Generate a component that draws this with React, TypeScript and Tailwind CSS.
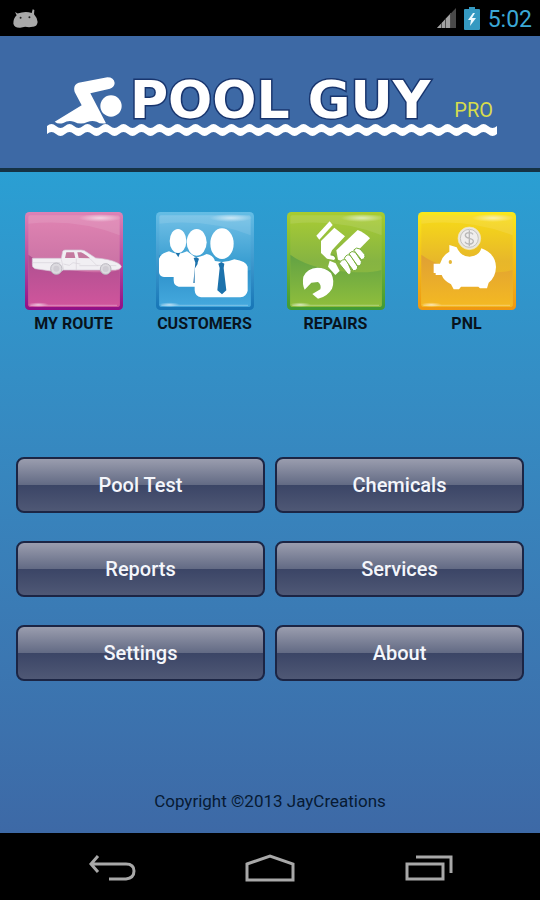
import type { ReactNode } from "react";

type Tile = {
  id: string;
  label: string;
  viewBox: string;
  edge: string[];
  top: string;
  middle: string;
  shade: string;
  bottom: string;
  art: ReactNode;
};

const actions = ["Pool Test", "Chemicals", "Reports", "Services", "Settings", "About"];

const tiles: Tile[] = [
  {
    id: "route",
    label: "MY ROUTE",
    edge: ["#dd83b6", "#8f0f86"],
    top: "#e084b2",
    middle: "#cc74a6",
    shade: "#ad5090",
    bottom: "#d0559c",
    viewBox: "27 24 294 294",
    art: (
      <g>
        <path
          d="M49 163H136L140 142Q142 138 148 138H195Q205 138 213 145L239 162Q280 165 303 176Q316 182 316 189Q313 196 298 198H142Q135 204 112 202L57 194Q47 190 49 180Z"
          fill="#f1eff3"
          stroke="#d5c7d7"
          strokeWidth="2"
        />
        <path d="M147 162L151 145H174L178 162ZM184 145H195Q203 147 222 163L188 162Z" fill="#c4799f" />
        <path
          d="M50 176H133M136 166L143 198M181 164V198M142 180L160 184 171 176 193 180M222 164L242 184 301 185M190 185H247"
          fill="none"
          stroke="#d6d2da"
          strokeWidth="2"
        />
        <circle cx="121" cy="194" r="17" fill="#dcdadf" stroke="#bab8c0" strokeWidth="3" />
        <circle cx="121" cy="194" r="9" fill="#cfccd3" />
        <circle cx="269" cy="195" r="16" fill="#dcdadf" stroke="#bab8c0" strokeWidth="3" />
        <circle cx="269" cy="195" r="9" fill="#cfccd3" />
      </g>
    ),
  },
  {
    id: "customers",
    label: "CUSTOMERS",
    edge: ["#65bde5", "#1675b6"],
    top: "#72c0e6",
    middle: "#3b9fd2",
    shade: "#2588c3",
    bottom: "#45a9de",
    viewBox: "31 26 294 294",
    art: (
      <g fill="#fff">
        <path d="M70 144Q96 158 124 144L151 163V211Q146 220 132 221H55Q41 219 40 207V166Q43 152 70 144Z" />
        <ellipse cx="97" cy="113" rx="25" ry="36" />
        <ellipse cx="153" cy="117" rx="30" ry="40" />
        <path d="M124 158Q150 169 183 152Q201 155 207 170V230Q202 248 176 250H99Q84 247 84 231V178Q93 163 124 158Z" />
        <path d="M144 164L152 162 160 166 156 178 151 239H143L149 178Z" fill="#1c72ac" />
        <path d="M192 168Q229 184 266 168Q302 174 306 190V262Q303 279 284 282H166Q148 279 147 261V196Q156 174 192 168Z" />
        <ellipse cx="229" cy="121" rx="35" ry="46" />
        <g fill="#1c72ac">
          <path d="M90 149H103L98 162Z" />
          <path d="M218 181L227 176 236 181 234 194 242 261 229 273 215 261 222 194Z" />
        </g>
      </g>
    ),
  },
  {
    id: "repairs",
    label: "REPAIRS",
    edge: ["#a9cc30", "#3f9a35"],
    top: "#a8cb34",
    middle: "#86b442",
    shade: "#62a244",
    bottom: "#8fbe3c",
    viewBox: "35 22 294 294",
    art: (
      <g fill="#fff">
        <path d="M123 93L163 50 172 61 132 105Z" />
        <path d="M137 109L177 69 209 95 170 137 165 149 182 158 176 166 155 162 137 145Z" />
        <path d="M183 137L247 76Q268 84 284 101L229 157 211 173 188 165Z" />
        <path d="M163 168L181 176 193 199 180 211 158 186Z" />
        <path d="M111 268L128 282Q156 276 170 252 179 229 167 205 150 189 126 189 96 190 84 216 80 238 88 255L108 234 128 232Q139 241 135 254Z" />
        <g stroke="#76ae39" strokeWidth="3" strokeLinejoin="round">
          <path d="M192 177Q199 161 214 166L227 197Q228 211 218 209Z" />
          <path d="M207 161Q215 145 226 153L247 186Q246 199 234 198Z" />
          <path d="M221 147Q229 136 240 143L258 170Q259 183 247 184Z" />
          <path d="M235 136Q243 126 254 133L268 149Q272 163 258 165Z" />
        </g>
        <path d="M166 151Q181 148 185 171" fill="none" stroke="#76ae39" strokeWidth="4" />
      </g>
    ),
  },
  {
    id: "pnl",
    label: "PNL",
    edge: ["#f9e81c", "#ee9612"],
    top: "#f7db18",
    middle: "#e7b72a",
    shade: "#dfa034",
    bottom: "#f4b922",
    viewBox: "32 24 294 294",
    art: (
      <g>
        <path
          d="M126 123L148 130Q160 158 187 158Q216 156 222 133Q265 149 266 189Q265 220 244 236L239 253H218L213 248H161L155 256H139L131 241Q109 230 103 213H85V207H79V179H98Q105 154 126 143Z"
          fill="#fff"
        />
        <ellipse cx="129" cy="174" rx="5" ry="6" fill="#e5b637" />
        <circle cx="186" cy="103" r="34" fill="#e9e6df" stroke="#f3e7b4" strokeWidth="2" />
        <circle cx="186" cy="103" r="27" fill="#efeded" stroke="#c3c2be" strokeWidth="3" />
        <path
          d="M197 91Q193 85 185 86 174 87 174 94 175 101 186 103 199 106 198 113 195 121 184 120 176 120 173 113M186 79V127"
          fill="none"
          stroke="#b9b8b8"
          strokeWidth="4"
        />
      </g>
    ),
  },
];

function TileIcon({ tile }: { tile: Tile }) {
  const [x, y] = tile.viewBox.split(" ").map(Number);

  return (
    <svg viewBox={tile.viewBox} className="size-[98px]" aria-hidden="true">
      <defs>
        <linearGradient id={`${tile.id}-edge`} x2="0" y2="1">
          <stop stopColor={tile.edge[0]} />
          <stop offset="1" stopColor={tile.edge[1]} />
        </linearGradient>
        <linearGradient id={`${tile.id}-face`} x2="0" y2="1">
          <stop stopColor={tile.top} />
          <stop offset="0.5" stopColor={tile.middle} />
          <stop offset="1" stopColor={tile.bottom} />
        </linearGradient>
        <linearGradient id={`${tile.id}-shade`} x2="0" y2="1">
          <stop stopColor={tile.shade} />
          <stop offset="1" stopColor={tile.bottom} />
        </linearGradient>
        <radialGradient id={`${tile.id}-shine`}>
          <stop stopColor="#fff" stopOpacity="0.6" />
          <stop offset="1" stopColor="#fff" stopOpacity="0" />
        </radialGradient>
      </defs>
      <g transform={`translate(${x} ${y})`}>
        <rect width="294" height="294" rx="13" fill={`url(#${tile.id}-edge)`} />
        <rect x="10" y="10" width="274" height="274" rx="5" fill={`url(#${tile.id}-face)`} />
        <path d="M10 128Q60 165 150 176T284 174V279Q284 284 279 284H15Q10 284 10 279Z" fill={`url(#${tile.id}-shade)`} />
        <path d="M10 35Q160 20 284 70V15Q284 10 279 10H15Q10 10 10 15Z" fill="#fff" opacity="0.1" />
        <ellipse cx="225" cy="18" rx="64" ry="12" fill={`url(#${tile.id}-shine)`} />
        <ellipse cx="40" cy="278" rx="32" ry="7" fill={`url(#${tile.id}-shine)`} />
        <path d="M16 280H276" stroke="#fff" strokeWidth="4" opacity="0.25" />
      </g>
      {tile.art}
    </svg>
  );
}

function StatusBar() {
  return (
    <div className="flex h-9 items-center justify-between bg-black pr-2 pl-[13px]">
      <svg viewBox="39 24 76 58" className="h-[19px] w-[25px]" aria-label="Debugging">
        <path
          d="M45 33L53 38Q75 30 96 36L99 25 104 27 103 40Q114 52 114 64 112 79 99 78 88 81 76 78L61 81Q43 82 40 69 39 53 50 43Z"
          fill="#a9a9a9"
        />
        <circle cx="62" cy="51" r="3" fill="#222" />
        <circle cx="89" cy="49" r="3" fill="#222" />
      </svg>
      <div className="flex items-center">
        <svg viewBox="0 0 20 22" className="h-[22px] w-5" aria-label="Signal">
          <path d="M1 21L20 1V21Z" fill="#494949" />
          <path d="M1 21L15 6V21Z" fill="#a2a2a2" />
          <path d="M5.500 16V21M9.500 12V21M14.500 6V21" stroke="#505050" />
        </svg>
        <svg viewBox="0 0 16 23" className="ml-2 h-[23px] w-4" aria-label="Battery charging">
          <path d="M5 0H11V2H15Q16 2 16 3V22Q16 23 15 23H1Q0 23 0 22V3Q0 2 1 2H5Z" fill="#3599c1" />
          <path d="M9 6L4 13H7L6 19 12 11H8L11 6Z" fill="#eefaff" />
        </svg>
        <time className="ml-2 pt-1 text-[23px] leading-8 text-[#3ba9d6]">5:02</time>
      </div>
    </div>
  );
}

function Swimmer() {
  return (
    <svg viewBox="162 227 204 141" className="h-[47px] w-[68px]" fill="#fff" aria-hidden="true">
      <path d="M236 244L322 228Q342 228 344 245 343 258 330 262L271 276 318 366Q301 369 290 361 276 356 262 362 242 372 222 361 205 355 190 365 175 370 164 361L245 312 224 272Q218 250 236 244Z" />
      <circle cx="333" cy="314" r="32" />
    </svg>
  );
}

function Waves() {
  const top = "q4.500 -4 9 0t9 0".repeat(25);
  const bottom = "q-4.500 4 -9 0t-9 0".repeat(25);

  return (
    <svg viewBox="0 0 450 12" className="h-3 w-[450px]" aria-hidden="true">
      <path d={`M0 2${top}V10${bottom}Z`} fill="#fff" />
    </svg>
  );
}

function Header() {
  return (
    <header className="flex flex-col items-center border-b-4 border-[#153244] bg-[#3d69a5] pt-10 pb-8 pl-1">
      <div className="flex h-12 w-[450px] items-center pl-[7px]">
        <Swimmer />
        <h1 className="flex flex-1 items-end justify-between pr-1 pl-2 text-white">
          <span className="font-[DejaVu_Sans,sans-serif] text-[52px] leading-12 font-bold whitespace-pre [paint-order:stroke_fill] [-webkit-text-stroke:3px_#18356e]">
            POOL GUY
          </span>
          <small className="text-[20px] leading-7 text-[#d7dc4c]">PRO</small>
        </h1>
      </div>
      <Waves />
    </header>
  );
}

function NavBar() {
  return (
    <nav className="flex h-[67px] items-center justify-between bg-black px-[87px] pt-1">
      <button type="button" aria-label="Back">
        <svg viewBox="0 0 52 30" className="h-[30px] w-[52px]" fill="none" stroke="#a8a8a8" strokeWidth="3">
          <path d="M11 2L4 10 11 18M4 10H39Q47 10 47 17T39 25H22" />
        </svg>
      </button>
      <button type="button" aria-label="Home">
        <svg viewBox="0 0 52 30" className="h-[30px] w-[52px]" fill="none" stroke="#a8a8a8" strokeWidth="3">
          <path d="M3 10L26 2 49 10V26H3Z" />
        </svg>
      </button>
      <button type="button" aria-label="Recent apps">
        <svg viewBox="0 0 52 30" className="h-[30px] w-[52px]" fill="none" stroke="#a8a8a8" strokeWidth="3">
          <path d="M6 10H42V25H6ZM15 3H50V19" />
        </svg>
      </button>
    </nav>
  );
}

export default function App() {
  return (
    <div className="flex min-h-screen flex-col bg-black font-[Roboto,sans-serif]">
      <StatusBar />
      <Header />
      <main className="flex flex-1 flex-col bg-linear-to-b from-[#2a9fd3] to-[#3d69a6] pt-10">
        <section className="grid grid-cols-4 px-2">
          {tiles.map((tile) => (
            <button key={tile.id} type="button" className="flex flex-col items-center gap-1 text-[#08131d]">
              <TileIcon tile={tile} />
              <span className="text-base leading-5 font-bold">{tile.label}</span>
            </button>
          ))}
        </section>
        <section className="mt-[123px] grid grid-cols-2 gap-x-[10px] gap-y-7 px-4">
          {actions.map((action) => (
            <button
              key={action}
              type="button"
              className="h-14 rounded-lg border-2 border-[#1c2544] bg-[linear-gradient(#9a9dae,#626a84_50%,#3b4566_50%,#4f5875)] text-xl font-medium text-[#f4f6fb]"
            >
              {action}
            </button>
          ))}
        </section>
        <footer className="mt-auto pb-5 text-center text-[17px] leading-6 text-[#071a33]">
          Copyright ©2013 JayCreations
        </footer>
      </main>
      <NavBar />
    </div>
  );
}
